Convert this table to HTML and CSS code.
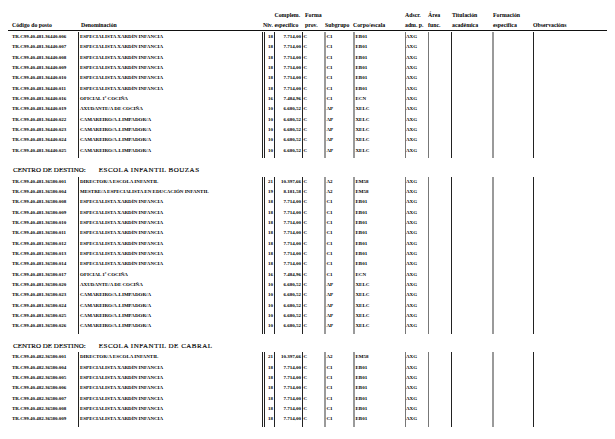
FILE: index.html
```html
<!DOCTYPE html>
<html lang="gl">
<head>
<meta charset="utf-8">
<title>Relación de postos</title>
<link rel="stylesheet" href="styles.css">
</head>
<body>
<div class="page">
  <div class="cols head">
    <div class="h code">Código do posto</div>
    <div class="h den">Denominación</div>
    <div class="h niv">Niv.</div>
    <div class="h esp">Complem.<br>específico</div>
    <div class="h frm">Forma<br>prov.</div>
    <div class="h sub">Subgrupo</div>
    <div class="h cor">Corpo/escala</div>
    <div class="h ads">Adscr.<br>adm. p.</div>
    <div class="h are">Área<br>func.</div>
    <div class="h tit">Titulación<br>académica</div>
    <div class="h fes">Formación<br>específica</div>
    <div class="h obs">Observacións</div>
  </div>

  <div class="block first">
    <div class="cols row"><div class="c code">TR.C99.40.481.36440.006</div><div class="c den">ESPECIALISTA XARDÍN INFANCIA</div><div class="c niv">18</div><div class="c esp">7.714,00</div><div class="c frm">C</div><div class="c sub">C1</div><div class="c cor">EB01</div><div class="c ads">AXG</div><div class="c are"></div><div class="c tit"></div><div class="c fes"></div><div class="c obs"></div></div>
    <div class="cols row"><div class="c code">TR.C99.40.481.36440.007</div><div class="c den">ESPECIALISTA XARDÍN INFANCIA</div><div class="c niv">18</div><div class="c esp">7.714,00</div><div class="c frm">C</div><div class="c sub">C1</div><div class="c cor">EB01</div><div class="c ads">AXG</div><div class="c are"></div><div class="c tit"></div><div class="c fes"></div><div class="c obs"></div></div>
    <div class="cols row"><div class="c code">TR.C99.40.481.36440.008</div><div class="c den">ESPECIALISTA XARDÍN INFANCIA</div><div class="c niv">18</div><div class="c esp">7.714,00</div><div class="c frm">C</div><div class="c sub">C1</div><div class="c cor">EB01</div><div class="c ads">AXG</div><div class="c are"></div><div class="c tit"></div><div class="c fes"></div><div class="c obs"></div></div>
    <div class="cols row"><div class="c code">TR.C99.40.481.36440.009</div><div class="c den">ESPECIALISTA XARDÍN INFANCIA</div><div class="c niv">18</div><div class="c esp">7.714,00</div><div class="c frm">C</div><div class="c sub">C1</div><div class="c cor">EB01</div><div class="c ads">AXG</div><div class="c are"></div><div class="c tit"></div><div class="c fes"></div><div class="c obs"></div></div>
    <div class="cols row"><div class="c code">TR.C99.40.481.36440.010</div><div class="c den">ESPECIALISTA XARDÍN INFANCIA</div><div class="c niv">18</div><div class="c esp">7.714,00</div><div class="c frm">C</div><div class="c sub">C1</div><div class="c cor">EB01</div><div class="c ads">AXG</div><div class="c are"></div><div class="c tit"></div><div class="c fes"></div><div class="c obs"></div></div>
    <div class="cols row"><div class="c code">TR.C99.40.481.36440.011</div><div class="c den">ESPECIALISTA XARDÍN INFANCIA</div><div class="c niv">18</div><div class="c esp">7.714,00</div><div class="c frm">C</div><div class="c sub">C1</div><div class="c cor">EB01</div><div class="c ads">AXG</div><div class="c are"></div><div class="c tit"></div><div class="c fes"></div><div class="c obs"></div></div>
    <div class="cols row"><div class="c code">TR.C99.40.481.36440.016</div><div class="c den">OFICIAL 1ª COCIÑA</div><div class="c niv">16</div><div class="c esp">7.484,96</div><div class="c frm">C</div><div class="c sub">C1</div><div class="c cor">ECN</div><div class="c ads">AXG</div><div class="c are"></div><div class="c tit"></div><div class="c fes"></div><div class="c obs"></div></div>
    <div class="cols row"><div class="c code">TR.C99.40.481.36440.019</div><div class="c den">AXUDANTE/A DE COCIÑA</div><div class="c niv">10</div><div class="c esp">6.680,52</div><div class="c frm">C</div><div class="c sub">AP</div><div class="c cor">XELC</div><div class="c ads">AXG</div><div class="c are"></div><div class="c tit"></div><div class="c fes"></div><div class="c obs"></div></div>
    <div class="cols row"><div class="c code">TR.C99.40.481.36440.022</div><div class="c den">CAMAREIRO/A-LIMPADOR/A</div><div class="c niv">10</div><div class="c esp">6.680,52</div><div class="c frm">C</div><div class="c sub">AP</div><div class="c cor">XELC</div><div class="c ads">AXG</div><div class="c are"></div><div class="c tit"></div><div class="c fes"></div><div class="c obs"></div></div>
    <div class="cols row"><div class="c code">TR.C99.40.481.36440.023</div><div class="c den">CAMAREIRO/A-LIMPADOR/A</div><div class="c niv">10</div><div class="c esp">6.680,52</div><div class="c frm">C</div><div class="c sub">AP</div><div class="c cor">XELC</div><div class="c ads">AXG</div><div class="c are"></div><div class="c tit"></div><div class="c fes"></div><div class="c obs"></div></div>
    <div class="cols row"><div class="c code">TR.C99.40.481.36440.024</div><div class="c den">CAMAREIRO/A-LIMPADOR/A</div><div class="c niv">10</div><div class="c esp">6.680,52</div><div class="c frm">C</div><div class="c sub">AP</div><div class="c cor">XELC</div><div class="c ads">AXG</div><div class="c are"></div><div class="c tit"></div><div class="c fes"></div><div class="c obs"></div></div>
    <div class="cols row"><div class="c code">TR.C99.40.481.36440.025</div><div class="c den">CAMAREIRO/A-LIMPADOR/A</div><div class="c niv">10</div><div class="c esp">6.680,52</div><div class="c frm">C</div><div class="c sub">AP</div><div class="c cor">XELC</div><div class="c ads">AXG</div><div class="c are"></div><div class="c tit"></div><div class="c fes"></div><div class="c obs"></div></div>
  </div>

  <div class="centro"><span class="lbl">CENTRO DE DESTINO:</span><span class="nm">ESCOLA INFANTIL BOUZAS</span></div>

  <div class="block">
    <div class="cols row"><div class="c code">TR.C99.40.481.36580.001</div><div class="c den">DIRECTOR/A ESCOLA INFANTIL</div><div class="c niv">21</div><div class="c esp">10.397,66</div><div class="c frm">C</div><div class="c sub">A2</div><div class="c cor">EM58</div><div class="c ads">AXG</div><div class="c are"></div><div class="c tit"></div><div class="c fes"></div><div class="c obs"></div></div>
    <div class="cols row"><div class="c code">TR.C99.40.481.36580.004</div><div class="c den">MESTRE/A ESPECIALISTA EN EDUCACIÓN INFANTIL</div><div class="c niv">19</div><div class="c esp">8.181,58</div><div class="c frm">C</div><div class="c sub">A2</div><div class="c cor">EM58</div><div class="c ads">AXG</div><div class="c are"></div><div class="c tit"></div><div class="c fes"></div><div class="c obs"></div></div>
    <div class="cols row"><div class="c code">TR.C99.40.481.36580.008</div><div class="c den">ESPECIALISTA XARDÍN INFANCIA</div><div class="c niv">18</div><div class="c esp">7.714,00</div><div class="c frm">C</div><div class="c sub">C1</div><div class="c cor">EB01</div><div class="c ads">AXG</div><div class="c are"></div><div class="c tit"></div><div class="c fes"></div><div class="c obs"></div></div>
    <div class="cols row"><div class="c code">TR.C99.40.481.36580.009</div><div class="c den">ESPECIALISTA XARDÍN INFANCIA</div><div class="c niv">18</div><div class="c esp">7.714,00</div><div class="c frm">C</div><div class="c sub">C1</div><div class="c cor">EB01</div><div class="c ads">AXG</div><div class="c are"></div><div class="c tit"></div><div class="c fes"></div><div class="c obs"></div></div>
    <div class="cols row"><div class="c code">TR.C99.40.481.36580.010</div><div class="c den">ESPECIALISTA XARDÍN INFANCIA</div><div class="c niv">18</div><div class="c esp">7.714,00</div><div class="c frm">C</div><div class="c sub">C1</div><div class="c cor">EB01</div><div class="c ads">AXG</div><div class="c are"></div><div class="c tit"></div><div class="c fes"></div><div class="c obs"></div></div>
    <div class="cols row"><div class="c code">TR.C99.40.481.36580.011</div><div class="c den">ESPECIALISTA XARDÍN INFANCIA</div><div class="c niv">18</div><div class="c esp">7.714,00</div><div class="c frm">C</div><div class="c sub">C1</div><div class="c cor">EB01</div><div class="c ads">AXG</div><div class="c are"></div><div class="c tit"></div><div class="c fes"></div><div class="c obs"></div></div>
    <div class="cols row"><div class="c code">TR.C99.40.481.36580.012</div><div class="c den">ESPECIALISTA XARDÍN INFANCIA</div><div class="c niv">18</div><div class="c esp">7.714,00</div><div class="c frm">C</div><div class="c sub">C1</div><div class="c cor">EB01</div><div class="c ads">AXG</div><div class="c are"></div><div class="c tit"></div><div class="c fes"></div><div class="c obs"></div></div>
    <div class="cols row"><div class="c code">TR.C99.40.481.36580.013</div><div class="c den">ESPECIALISTA XARDÍN INFANCIA</div><div class="c niv">18</div><div class="c esp">7.714,00</div><div class="c frm">C</div><div class="c sub">C1</div><div class="c cor">EB01</div><div class="c ads">AXG</div><div class="c are"></div><div class="c tit"></div><div class="c fes"></div><div class="c obs"></div></div>
    <div class="cols row"><div class="c code">TR.C99.40.481.36580.014</div><div class="c den">ESPECIALISTA XARDÍN INFANCIA</div><div class="c niv">18</div><div class="c esp">7.714,00</div><div class="c frm">C</div><div class="c sub">C1</div><div class="c cor">EB01</div><div class="c ads">AXG</div><div class="c are"></div><div class="c tit"></div><div class="c fes"></div><div class="c obs"></div></div>
    <div class="cols row"><div class="c code">TR.C99.40.481.36580.017</div><div class="c den">OFICIAL 1ª COCIÑA</div><div class="c niv">16</div><div class="c esp">7.484,96</div><div class="c frm">C</div><div class="c sub">C1</div><div class="c cor">ECN</div><div class="c ads">AXG</div><div class="c are"></div><div class="c tit"></div><div class="c fes"></div><div class="c obs"></div></div>
    <div class="cols row"><div class="c code">TR.C99.40.481.36580.020</div><div class="c den">AXUDANTE/A DE COCIÑA</div><div class="c niv">10</div><div class="c esp">6.680,52</div><div class="c frm">C</div><div class="c sub">AP</div><div class="c cor">XELC</div><div class="c ads">AXG</div><div class="c are"></div><div class="c tit"></div><div class="c fes"></div><div class="c obs"></div></div>
    <div class="cols row"><div class="c code">TR.C99.40.481.36580.023</div><div class="c den">CAMAREIRO/A-LIMPADOR/A</div><div class="c niv">10</div><div class="c esp">6.680,52</div><div class="c frm">C</div><div class="c sub">AP</div><div class="c cor">XELC</div><div class="c ads">AXG</div><div class="c are"></div><div class="c tit"></div><div class="c fes"></div><div class="c obs"></div></div>
    <div class="cols row"><div class="c code">TR.C99.40.481.36580.024</div><div class="c den">CAMAREIRO/A-LIMPADOR/A</div><div class="c niv">10</div><div class="c esp">6.680,52</div><div class="c frm">C</div><div class="c sub">AP</div><div class="c cor">XELC</div><div class="c ads">AXG</div><div class="c are"></div><div class="c tit"></div><div class="c fes"></div><div class="c obs"></div></div>
    <div class="cols row"><div class="c code">TR.C99.40.481.36580.025</div><div class="c den">CAMAREIRO/A-LIMPADOR/A</div><div class="c niv">10</div><div class="c esp">6.680,52</div><div class="c frm">C</div><div class="c sub">AP</div><div class="c cor">XELC</div><div class="c ads">AXG</div><div class="c are"></div><div class="c tit"></div><div class="c fes"></div><div class="c obs"></div></div>
    <div class="cols row"><div class="c code">TR.C99.40.481.36580.026</div><div class="c den">CAMAREIRO/A-LIMPADOR/A</div><div class="c niv">10</div><div class="c esp">6.680,52</div><div class="c frm">C</div><div class="c sub">AP</div><div class="c cor">XELC</div><div class="c ads">AXG</div><div class="c are"></div><div class="c tit"></div><div class="c fes"></div><div class="c obs"></div></div>
  </div>

  <div class="centro"><span class="lbl">CENTRO DE DESTINO:</span><span class="nm">ESCOLA INFANTIL DE CABRAL</span></div>

  <div class="block">
    <div class="cols row"><div class="c code">TR.C99.40.482.36580.001</div><div class="c den">DIRECTOR/A ESCOLA INFANTIL</div><div class="c niv">21</div><div class="c esp">10.397,66</div><div class="c frm">C</div><div class="c sub">A2</div><div class="c cor">EM58</div><div class="c ads">AXG</div><div class="c are"></div><div class="c tit"></div><div class="c fes"></div><div class="c obs"></div></div>
    <div class="cols row"><div class="c code">TR.C99.40.482.36580.004</div><div class="c den">ESPECIALISTA XARDÍN INFANCIA</div><div class="c niv">18</div><div class="c esp">7.714,00</div><div class="c frm">C</div><div class="c sub">C1</div><div class="c cor">EB01</div><div class="c ads">AXG</div><div class="c are"></div><div class="c tit"></div><div class="c fes"></div><div class="c obs"></div></div>
    <div class="cols row"><div class="c code">TR.C99.40.482.36580.005</div><div class="c den">ESPECIALISTA XARDÍN INFANCIA</div><div class="c niv">18</div><div class="c esp">7.714,00</div><div class="c frm">C</div><div class="c sub">C1</div><div class="c cor">EB01</div><div class="c ads">AXG</div><div class="c are"></div><div class="c tit"></div><div class="c fes"></div><div class="c obs"></div></div>
    <div class="cols row"><div class="c code">TR.C99.40.482.36580.006</div><div class="c den">ESPECIALISTA XARDÍN INFANCIA</div><div class="c niv">18</div><div class="c esp">7.714,00</div><div class="c frm">C</div><div class="c sub">C1</div><div class="c cor">EB01</div><div class="c ads">AXG</div><div class="c are"></div><div class="c tit"></div><div class="c fes"></div><div class="c obs"></div></div>
    <div class="cols row"><div class="c code">TR.C99.40.482.36580.007</div><div class="c den">ESPECIALISTA XARDÍN INFANCIA</div><div class="c niv">18</div><div class="c esp">7.714,00</div><div class="c frm">C</div><div class="c sub">C1</div><div class="c cor">EB01</div><div class="c ads">AXG</div><div class="c are"></div><div class="c tit"></div><div class="c fes"></div><div class="c obs"></div></div>
    <div class="cols row"><div class="c code">TR.C99.40.482.36580.008</div><div class="c den">ESPECIALISTA XARDÍN INFANCIA</div><div class="c niv">18</div><div class="c esp">7.714,00</div><div class="c frm">C</div><div class="c sub">C1</div><div class="c cor">EB01</div><div class="c ads">AXG</div><div class="c are"></div><div class="c tit"></div><div class="c fes"></div><div class="c obs"></div></div>
    <div class="cols row"><div class="c code">TR.C99.40.482.36580.009</div><div class="c den">ESPECIALISTA XARDÍN INFANCIA</div><div class="c niv">18</div><div class="c esp">7.714,00</div><div class="c frm">C</div><div class="c sub">C1</div><div class="c cor">EB01</div><div class="c ads">AXG</div><div class="c are"></div><div class="c tit"></div><div class="c fes"></div><div class="c obs"></div></div>
  </div>
</div>
</body>
</html>
```

FILE: styles.css
```css
html, body {
  margin: 0;
  padding: 0;
  background: #ffffff;
}

body {
  font-family: "Liberation Serif", "Times New Roman", serif;
  color: #000;
}

.page {
  width: 599px;
  padding: 10px 8px 0 8px;
}

.cols {
  display: grid;
  grid-template-columns: 70px 184px 12px 28px 22px 29px 52px 23px 23px 41px 41px 74px;
}

/* ---------- header ---------- */
.head {
  font-size: 5.8px;
  font-weight: bold;
  line-height: 10px;
  border-bottom: 1px solid #111;
}

.head .h {
  align-self: end;
  white-space: nowrap;
}

.head .code { padding-left: 4px; }
.head .den  { padding-left: 3px; }
.head .niv  { padding-left: 1px; }
.head .esp  { padding-left: 0.5px; }
.head .frm  { padding-left: 3px; }
.head .sub  { padding-left: 1px; }
.head .tit  { padding-left: 1px; }
.head .fes  { padding-left: 1px; }

/* ---------- data rows ---------- */
.block {
  margin-top: 1px;
}

.row {
  height: 10.35px;
  line-height: 10.35px;
  font-size: 5px;
  font-weight: bold;
}

.row:last-child {
  height: 12.35px;
}

.row .c {
  box-sizing: border-box;
  white-space: nowrap;
  border-left: 1px solid #222;
}

.row .code {
  border-left: none;
  padding-left: 4px;
}

.row .den { padding-left: 1px; }

.row .niv {
  border-left: 3px double #222;
  padding-left: 3px;
}

.row .esp {
  text-align: right;
  padding-right: 1px;
}

.row .frm { padding-left: 0.5px; }

.row .sub {
  border-left: 2px solid #9a9a9a;
  padding-left: 0.5px;
}

.row .cor {
  border-left: 2px solid #9a9a9a;
  padding-left: 0.5px;
}

.row .ads { border-left-color: #777; }
.row .are { border-left-color: #777; }
.row .fes { border-left: 2px solid #9a9a9a; }

/* ---------- section headings ---------- */
.centro {
  display: flex;
  gap: 13px;
  margin-top: 7px;
  margin-bottom: 1.5px;
  padding-left: 5px;
  font-size: 7px;
  line-height: 10px;
  color: #000;
  white-space: nowrap;
  -webkit-text-stroke: 0.15px #000;
}

.centro .nm {
  letter-spacing: 0.5px;
}
```
